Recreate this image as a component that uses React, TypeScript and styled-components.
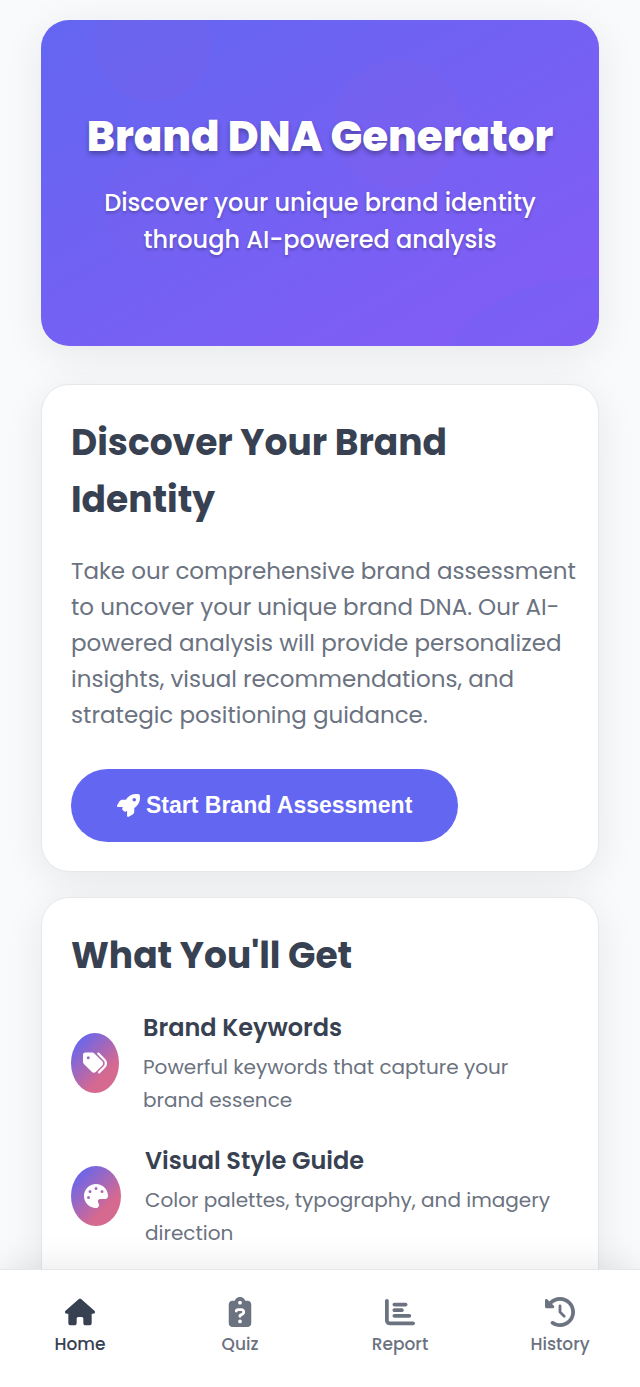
import React from "react";
import styled, { createGlobalStyle, css } from "styled-components";
import {
  FaRocket,
  FaTags,
  FaPalette,
  FaHouse,
  FaClipboardQuestion,
  FaChartBar,
  FaClockRotateLeft,
} from "react-icons/fa6";

const GlobalStyle = createGlobalStyle`
  *, *::before, *::after { box-sizing: border-box; }
  body {
    margin: 0;
    background: #f9fafc;
    color: #374151;
    font-family: Poppins, Inter, sans-serif;
  }
  h1, h2, h3, p, ul { margin: 0; padding: 0; }
`;

const Page = styled.div`
  display: flex;
  flex-direction: column;
  height: 100vh;
`;

const Content = styled.main`
  flex: 1;
  min-height: 0;
  overflow-y: auto;
  scrollbar-width: none;
  padding: 20px 41px 0;
`;

const surface = css`
  border-radius: 28px;
  box-shadow: 0 8px 40px rgba(0, 0, 0, 0.08);
`;

const Hero = styled.header`
  ${surface}
  display: flex;
  flex-direction: column;
  align-items: center;
  padding: 87px 40px 88px;
  margin-bottom: 38px;
  text-align: center;
  color: #fff;
  background:
    radial-gradient(circle 60px at 20% 7%, rgba(236, 72, 153, 0.03) 96%, transparent),
    radial-gradient(circle 68px at 64% 32%, rgba(236, 72, 153, 0.03) 90%, transparent),
    radial-gradient(circle 54px at 20% 58%, rgba(236, 72, 153, 0.02) 90%, transparent),
    radial-gradient(ellipse 150px 110px at 98% 112%, rgba(99, 102, 241, 0.2) 96%, transparent),
    linear-gradient(150deg, #6366f1, #855cf6);
`;

const HeroTitle = styled.h1`
  margin-bottom: 17px;
  font-size: 42px;
  font-weight: 800;
  line-height: 60px;
  white-space: nowrap;
  text-shadow: 0 3px 5px rgba(0, 0, 0, 0.3);
`;

const HeroText = styled.p`
  max-width: 440px;
  font-size: 24px;
  font-weight: 500;
  line-height: 37px;
  text-shadow: 0 2px 3px rgba(0, 0, 0, 0.25);
`;

const Card = styled.section<{ $bottom?: number }>`
  ${surface}
  margin-bottom: 25px;
  padding: 29px 20px ${(p) => p.$bottom ?? 29}px 29px;
  border: 1px solid #e5e7eb;
  background: #fff;
`;

const CardTitle = styled.h2`
  font-size: 36px;
  font-weight: 700;
  line-height: 57px;
`;

const CardText = styled.p`
  margin: 25px 0 36px;
  color: #6b7280;
  font-size: 23px;
  line-height: 36px;
`;

const StartButton = styled.button`
  display: inline-flex;
  align-items: center;
  gap: 6px;
  height: 73px;
  padding: 0 46px;
  border: 0;
  border-radius: 37px;
  background: #6366f1;
  color: #fff;
  font: 700 23px "Liberation Sans", Arial, sans-serif;
  white-space: nowrap;
  cursor: pointer;
`;

const FeatureList = styled.ul`
  display: grid;
  gap: 25px;
  margin-top: 25px;
  padding-right: 10px;
  list-style: none;
`;

const Feature = styled.li`
  display: flex;
  align-items: center;
  gap: 24px;
`;

const FeatureIcon = styled.span<{ $width: number }>`
  display: flex;
  flex: none;
  align-items: center;
  justify-content: center;
  width: ${(p) => p.$width}px;
  height: 60px;
  border-radius: 50%;
  background: linear-gradient(135deg, #6366f1 10%, #d6698f 70%);
  color: #fff;
  font-size: 24px;
`;

const FeatureTitle = styled.h3`
  margin-bottom: 4px;
  font-size: 24px;
  font-weight: 600;
  line-height: 38px;
`;

const FeatureText = styled.p`
  color: #6b7280;
  font-size: 20px;
  line-height: 33px;
`;

const BottomNav = styled.nav`
  position: relative;
  display: grid;
  grid-template-columns: repeat(4, 1fr);
  padding: 27px 0 29px;
  border-top: 1px solid #e5e7eb;
  background: #fff;
  box-shadow: 0 -6px 30px rgba(0, 0, 0, 0.08);
`;

const NavLink = styled.a<{ $active?: boolean }>`
  display: flex;
  flex-direction: column;
  align-items: center;
  gap: 3px;
  color: ${(p) => (p.$active ? "#374151" : "#6b7280")};
  font-size: 17px;
  font-weight: 500;
  line-height: 28px;
  text-decoration: none;

  svg {
    width: auto;
    height: 30px;
  }
`;

const features = [
  {
    title: "Brand Keywords",
    text: "Powerful keywords that capture your brand essence",
    icon: <FaTags />,
    width: 48,
  },
  {
    title: "Visual Style Guide",
    text: "Color palettes, typography, and imagery direction",
    icon: <FaPalette />,
    width: 50,
  },
];

const links = [
  { label: "Home", icon: <FaHouse />, active: true },
  { label: "Quiz", icon: <FaClipboardQuestion /> },
  { label: "Report", icon: <FaChartBar /> },
  { label: "History", icon: <FaClockRotateLeft /> },
];

export default function App() {
  return (
    <Page>
      <GlobalStyle />
      <Content>
        <Hero>
          <HeroTitle>Brand DNA Generator</HeroTitle>
          <HeroText>Discover your unique brand identity through AI-powered analysis</HeroText>
        </Hero>
        <Card>
          <CardTitle>Discover Your Brand Identity</CardTitle>
          <CardText>
            Take our comprehensive brand assessment to uncover your unique brand DNA. Our
            AI-powered analysis will provide personalized insights, visual recommendations, and
            strategic positioning guidance.
          </CardText>
          <StartButton type="button">
            <FaRocket />
            Start Brand Assessment
          </StartButton>
        </Card>
        <Card $bottom={80}>
          <CardTitle>What You'll Get</CardTitle>
          <FeatureList>
            {features.map((f) => (
              <Feature key={f.title}>
                <FeatureIcon $width={f.width}>{f.icon}</FeatureIcon>
                <div>
                  <FeatureTitle>{f.title}</FeatureTitle>
                  <FeatureText>{f.text}</FeatureText>
                </div>
              </Feature>
            ))}
          </FeatureList>
        </Card>
      </Content>
      <BottomNav aria-label="Main">
        {links.map((l) => (
          <NavLink
            key={l.label}
            href="#"
            $active={l.active}
            aria-current={l.active ? "page" : undefined}
          >
            {l.icon}
            {l.label}
          </NavLink>
        ))}
      </BottomNav>
    </Page>
  );
}
